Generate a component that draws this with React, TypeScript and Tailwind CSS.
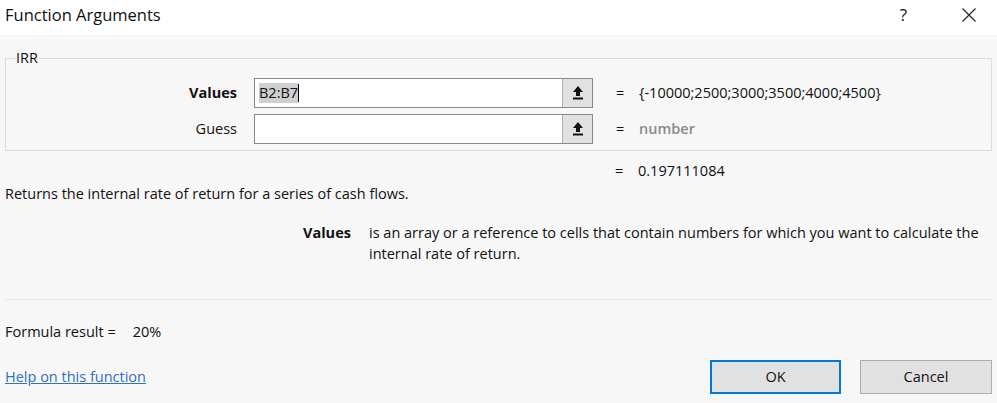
import React from "react";

const UploadBtn = () => (
  <div className="w-[30px] h-full flex items-center justify-center bg-[#e1e1e1] border-l border-[#adadad]">
    <svg width="12" height="16" viewBox="0 0 12 16">
      <path d="M6 1 L11 7 L8 7 L8 11 L4 11 L4 7 L1 7 Z" fill="#111" />
      <rect x="1" y="12.5" width="10" height="2" fill="#111" />
    </svg>
  </div>
);

const Row = ({ label, bold, value, muted, children }: { label: string; bold?: boolean; value: string; muted?: boolean; children?: React.ReactNode }) => (
  <div className="flex items-center h-[30px]">
    <div className={`w-[231px] text-right ${bold ? "font-bold" : ""}`}>{label}</div>
    <div className="ml-[17px] w-[339px] h-[30px] flex border border-[#8a8a8a] bg-white">
      <div className="flex-1 flex items-center pl-[4px]">{children}</div>
      <UploadBtn />
    </div>
    <div className="ml-[23px] w-[23px]">=</div>
    <div className={muted ? "text-[#8a8a8a] font-semibold" : ""}>{value}</div>
  </div>
);

export default function App() {
  return (
    <div
      className="w-[997px] h-[403px] bg-[#f7f7f7] text-[14.5px] leading-[20px] text-[#111] overflow-hidden"
      style={{ fontFamily: '"Open Sans", "Noto Sans", sans-serif' }}
    >
      <div className="h-[35px] bg-white flex items-start pt-[4px] pl-[5px] pr-[20px]">
        <div className="text-[16.5px] leading-[22px] flex-1">Function Arguments</div>
        <div className="text-[17px] leading-[22px] mr-[54px]">?</div>
        <svg width="16" height="16" viewBox="0 0 16 16" className="mt-[3px]">
          <path d="M1.5 1.5 L14.5 14.5 M14.5 1.5 L1.5 14.5" stroke="#222" strokeWidth="1.2" />
        </svg>
      </div>
      <div className="px-[5px]">
        <fieldset className="mt-[13px] border border-[#dcdcdc] pt-[10px] pb-[6px] flex flex-col gap-[6px]">
          <legend className="ml-[9px] px-[1px] leading-[20px]">IRR</legend>
          <Row label="Values" bold value="{-10000;2500;3000;3500;4000;4500}">
            <span className="bg-[#cfcfcf]">B2:B7</span>
            <span className="w-[1px] h-[18px] bg-black" />
          </Row>
          <Row label="Guess" value="number" muted />
        </fieldset>
        <div className="flex mt-[10px]">
          <div className="ml-[610px] w-[23px]">=</div>
          <div>0.197111084</div>
        </div>
        <div className="mt-[3px]">Returns the internal rate of return for a series of cash flows.</div>
        <div className="flex mt-[18px] leading-[21px]">
          <div className="ml-[298px] w-[66px] font-bold">Values</div>
          <div className="flex-1">
            is an array or a reference to cells that contain numbers for which you want to calculate the internal rate of return.
          </div>
        </div>
        <div className="mt-[35px] border-t border-[#e4e4e4]" />
        <div className="mt-[22px] flex">
          <span>Formula result =</span>
          <span className="ml-[17px]">20%</span>
        </div>
        <div className="mt-[18px] flex items-center h-[34px]">
          <a className="flex-1 text-[#2f6fc4] underline cursor-pointer">Help on this function</a>
          <button className="w-[131px] h-[34px] bg-[#e1e1e1] border-2 border-[#0078d7]">OK</button>
          <button className="ml-[19px] w-[132px] h-[34px] bg-[#e1e1e1] border border-[#adadad]">Cancel</button>
        </div>
      </div>
    </div>
  );
}
